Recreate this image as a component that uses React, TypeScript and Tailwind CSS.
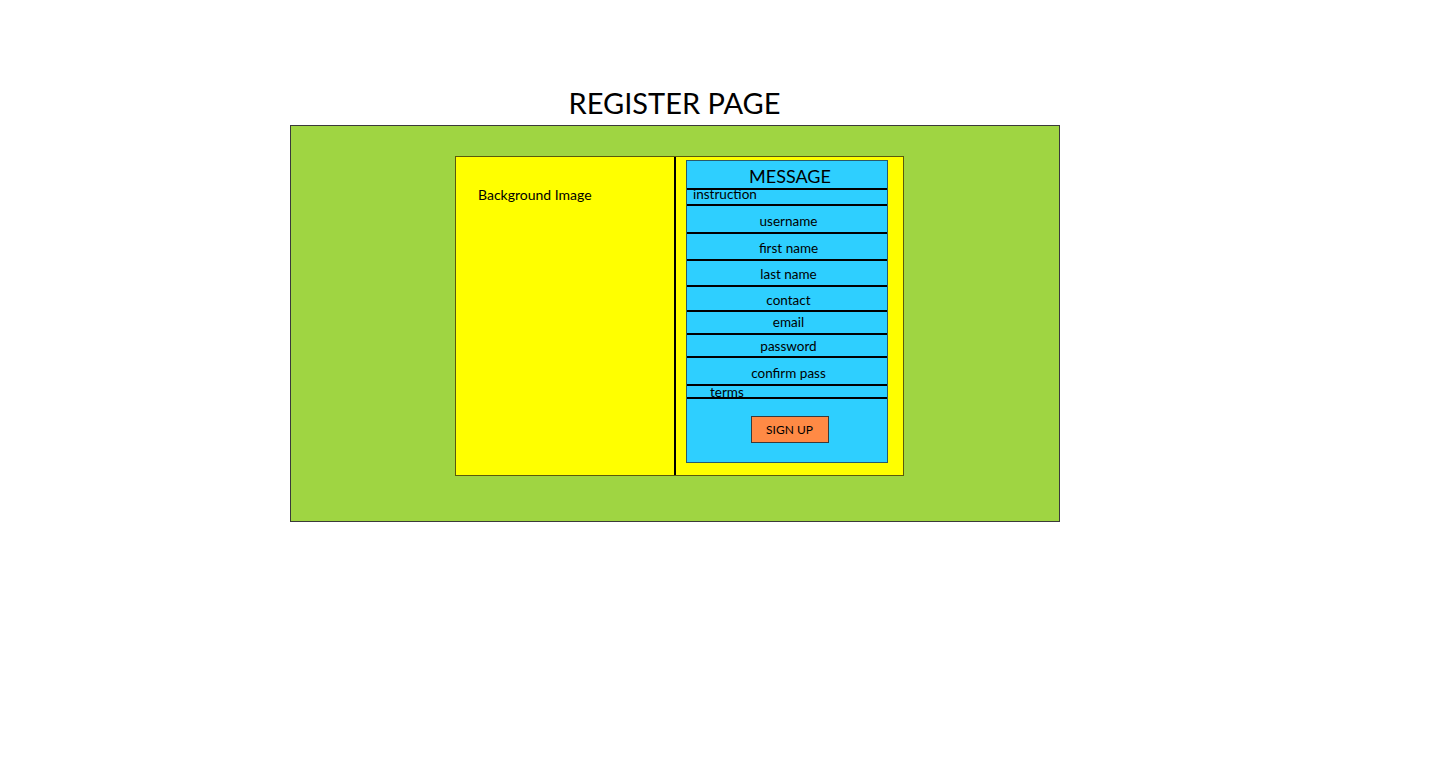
import React from "react";

const font = { fontFamily: "Lato, 'Noto Sans', sans-serif" };

function Line() {
  return <div className="h-[2px] bg-black" />;
}

function Row({ h, label, pt = "" }: { h: string; label: string; pt?: string }) {
  return (
    <div className={`${h} flex justify-center items-center pl-[3px] text-[13.5px] text-black leading-none`}>
      <span className={pt}>{label}</span>
    </div>
  );
}

export default function App() {
  return (
    <div className="w-[1440px] h-[761px] bg-white" style={font}>
      <div className="pl-[290px] pt-[86px]">
        <div className="w-[769px] h-[39px] text-center text-[29px] leading-[34px] text-black">REGISTER PAGE</div>
        <div className="w-[770px] h-[397px] bg-[#9fd542] border border-[#3a3a3a] pl-[164px] pt-[30px]">
          <div className="w-[449px] h-[320px] bg-[#ffff00] border border-[#5b5b0a] flex">
            <div className="w-[218px] pl-[22px] pt-[31px] text-[14px] leading-none text-black">Background Image</div>
            <div className="w-[2px] bg-black" />
            <div className="pl-[10px] pt-[3px]">
              <div className="w-[202px] h-[303px] bg-[#2ecfff] border border-[#2a5a6a] flex flex-col">
                <div className="h-[27px] flex items-center justify-center pl-[6px] text-[18px] leading-none pt-[3px]">MESSAGE</div>
                <Line />
                <div className="h-[14px] pl-[6px] text-[13.5px] leading-none">
                  <span className="relative -top-[2px]">instruction</span>
                </div>
                <Line />
                <Row h="h-[26px]" label="username" pt="pt-[6px]" />
                <Line />
                <Row h="h-[25px]" label="first name" pt="pt-[5px]" />
                <Line />
                <Row h="h-[24px]" label="last name" pt="pt-[4px]" />
                <Line />
                <Row h="h-[23px]" label="contact" pt="pt-[5px]" />
                <Line />
                <Row h="h-[21px]" label="email" pt="pt-[1px]" />
                <Line />
                <Row h="h-[21px]" label="password" pt="pt-[3px]" />
                <Line />
                <Row h="h-[26px]" label="confirm pass" pt="pt-[6px]" />
                <Line />
                <div className="h-[11px] pl-[23px] text-[13.5px] leading-[11px] pt-[1px] overflow-visible">terms</div>
                <Line />
                <div className="flex-1 flex justify-center pl-[5px] pt-[17px]">
                  <div className="w-[78px] h-[27px] bg-[#ff8a45] border border-[#3b3b3b] flex items-center justify-center text-[12px] leading-none">SIGN UP</div>
                </div>
              </div>
            </div>
          </div>
        </div>
      </div>
    </div>
  );
}
